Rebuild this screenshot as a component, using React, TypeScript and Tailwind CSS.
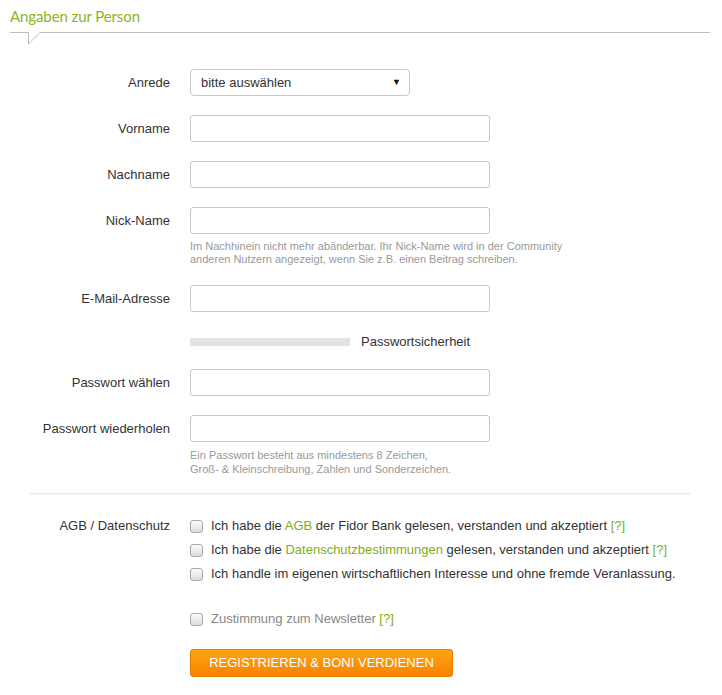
import React from "react";

const Box = () => (
  <span className="inline-block w-[13px] h-[13px] rounded-[3px] border border-[#a9a9a9] bg-gradient-to-b from-[#fcfcfc] to-[#dcdcdc] shrink-0" />
);

function Row({ label, children }: { label: string; children: React.ReactNode }) {
  return (
    <div className="flex items-start">
      <div className="w-[170px] h-[27px] flex items-center justify-end shrink-0">{label}</div>
      <div className="ml-[20px]">{children}</div>
    </div>
  );
}

const Input = () => (
  <div className="w-[300px] h-[27px] rounded-[3px] border border-[#c8c8c8] bg-white" />
);

export default function App() {
  return (
    <div className="w-[722px] h-[695px] bg-white font-['Liberation_Sans',Arial,sans-serif] text-[13px] text-[#333]">
      <div className="h-[32px] pl-[10px] pt-[6px] font-['Lato',sans-serif] text-[15px] leading-[20px] tracking-[-0.1px] text-[#8ab523]">
        Angaben zur Person
      </div>
      <svg width="722" height="13" className="block">
        <path d="M10 0.5 H28.5 V12 L40 0.5 H710" fill="none" stroke="#bdbdbd" strokeWidth="1" />
      </svg>
      <div className="mt-[24px] flex flex-col">
        <Row label="Anrede">
          <div className="w-[220px] h-[27px] rounded-[4px] border border-[#c8c8c8] bg-white flex items-center justify-between pl-[10px] pr-[8px]">
            <span>bitte auswählen</span>
            <span className="text-[9px] text-[#111]">▼</span>
          </div>
        </Row>
        <div className="h-[19px]" />
        <Row label="Vorname"><Input /></Row>
        <div className="h-[19px]" />
        <Row label="Nachname"><Input /></Row>
        <div className="h-[19px]" />
        <Row label="Nick-Name">
          <Input />
          <div className="mt-[6px] text-[11px] leading-[13px] text-[#999]">
            Im Nachhinein nicht mehr abänderbar. Ihr Nick-Name wird in der Community<br />
            anderen Nutzern angezeigt, wenn Sie z.B. einen Beitrag schreiben.
          </div>
        </Row>
        <div className="h-[19px]" />
        <Row label="E-Mail-Adresse"><Input /></Row>
        <div className="h-[23px]" />
        <div className="flex items-center h-[14px] ml-[190px]">
          <div className="w-[160px] h-[8px] bg-[#e3e3e3]" />
          <span className="ml-[11px]">Passwortsicherheit</span>
        </div>
        <div className="h-[20px]" />
        <Row label="Passwort wählen"><Input /></Row>
        <div className="h-[19px]" />
        <Row label="Passwort wiederholen">
          <Input />
          <div className="mt-[6px] text-[11px] leading-[14px] text-[#999]">
            Ein Passwort besteht aus mindestens 8 Zeichen,<br />
            Groß- &amp; Kleinschreibung, Zahlen und Sonderzeichen.
          </div>
        </Row>
        <div className="mt-[17px] mx-[30px] w-[660px] border-t border-[#e6e6e6] h-[2px] border-b border-b-[#f6f6f6]" />
        <div className="mt-[19px] flex items-start">
          <div className="w-[170px] h-[24px] flex items-center justify-end shrink-0">AGB / Datenschutz</div>
          <div className="ml-[20px] flex flex-col">
            <div className="h-[24px] flex items-center gap-[8px]">
              <Box />
              <span>Ich habe die <span className="text-[#7fae16]">AGB</span> der Fidor Bank gelesen, verstanden und akzeptiert <span className="text-[#7fae16]">[?]</span></span>
            </div>
            <div className="h-[24px] flex items-center gap-[8px]">
              <Box />
              <span>Ich habe die <span className="text-[#7fae16]">Datenschutzbestimmungen</span> gelesen, verstanden und akzeptiert <span className="text-[#7fae16]">[?]</span></span>
            </div>
            <div className="h-[24px] flex items-center gap-[8px]">
              <Box />
              <span>Ich handle im eigenen wirtschaftlichen Interesse und ohne fremde Veranlassung.</span>
            </div>
            <div className="mt-[21px] h-[24px] flex items-center gap-[8px] text-[#888]">
              <Box />
              <span>Zustimmung zum Newsletter <span className="text-[#7fae16]">[?]</span></span>
            </div>
            <div className="mt-[18px] w-[263px] h-[28px] rounded-[3px] border border-[#e47c00] bg-gradient-to-b from-[#ffa412] to-[#f78200] text-white flex items-center justify-center">
              REGISTRIEREN &amp; BONI VERDIENEN
            </div>
          </div>
        </div>
      </div>
    </div>
  );
}
